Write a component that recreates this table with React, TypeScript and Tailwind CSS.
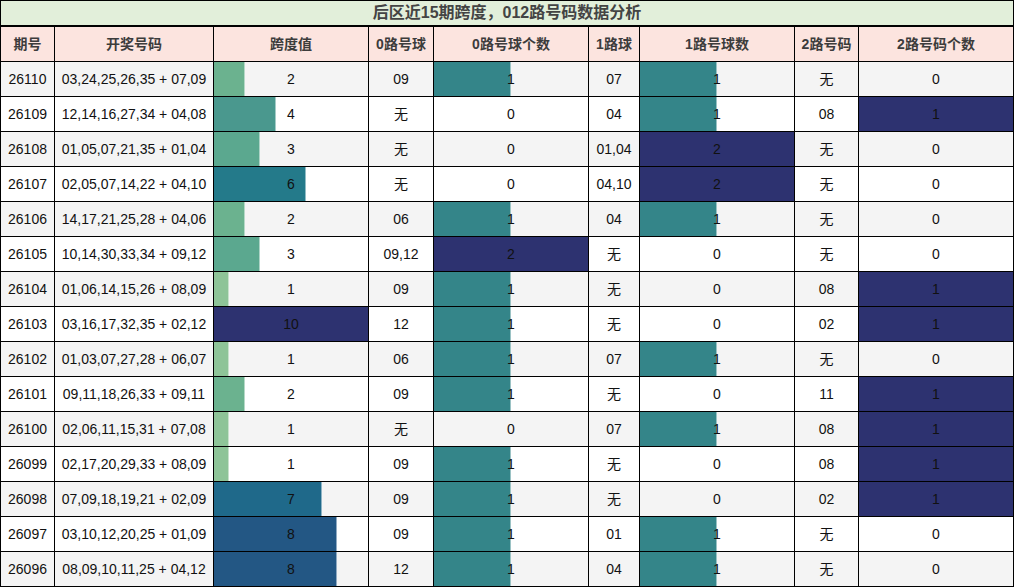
import React from "react";

type Row = [string, string, number, string, number, string, number, string, number];

const rows: Row[] = [
  ["26110", "03,24,25,26,35 + 07,09", 2, "09", 1, "07", 1, "无", 0],
  ["26109", "12,14,16,27,34 + 04,08", 4, "无", 0, "04", 1, "08", 1],
  ["26108", "01,05,07,21,35 + 01,04", 3, "无", 0, "01,04", 2, "无", 0],
  ["26107", "02,05,07,14,22 + 04,10", 6, "无", 0, "04,10", 2, "无", 0],
  ["26106", "14,17,21,25,28 + 04,06", 2, "06", 1, "04", 1, "无", 0],
  ["26105", "10,14,30,33,34 + 09,12", 3, "09,12", 2, "无", 0, "无", 0],
  ["26104", "01,06,14,15,26 + 08,09", 1, "09", 1, "无", 0, "08", 1],
  ["26103", "03,16,17,32,35 + 02,12", 10, "12", 1, "无", 0, "02", 1],
  ["26102", "01,03,07,27,28 + 06,07", 1, "06", 1, "07", 1, "无", 0],
  ["26101", "09,11,18,26,33 + 09,11", 2, "09", 1, "无", 0, "11", 1],
  ["26100", "02,06,11,15,31 + 07,08", 1, "无", 0, "07", 1, "08", 1],
  ["26099", "02,17,20,29,33 + 08,09", 1, "09", 1, "无", 0, "08", 1],
  ["26098", "07,09,18,19,21 + 02,09", 7, "09", 1, "无", 0, "02", 1],
  ["26097", "03,10,12,20,25 + 01,09", 8, "09", 1, "01", 1, "无", 0],
  ["26096", "08,09,10,11,25 + 04,12", 8, "12", 1, "04", 1, "无", 0],
];

const spanColor: Record<number, string> = {
  1: "#8ec498",
  2: "#6bb28f",
  3: "#5ba88f",
  4: "#4a988e",
  5: "#37898c",
  6: "#247a8a",
  7: "#1f698a",
  8: "#235784",
  9: "#284480",
  10: "#2d3270",
};

const widths = ["w-[54px]", "w-[159px]", "w-[155px]", "w-[65px]", "w-[155px]", "w-[51px]", "w-[155px]", "w-[64px]", "w-[155px]"];

const headers = ["期号", "开奖号码", "跨度值", "0路号球", "0路号球个数", "1路球", "1路号球数", "2路号码", "2路号码个数"];

function BarCell({ w, value, frac, color }: { w: string; value: number; frac: number; color: string }) {
  return (
    <div className={`${w} relative h-[35px] shrink-0 border-r border-b border-black flex items-center justify-center`}>
      {frac > 0 && (
        <div
          className={`absolute left-0 top-0 bottom-0 ${frac < 1 ? "border-r border-r-white/50" : ""}`}
          style={{ width: `${frac * 100}%`, backgroundColor: color }}
        />
      )}
      <span className="relative text-[14px] text-[#111]">{value}</span>
    </div>
  );
}

function TextCell({ w, children }: { w: string; children: React.ReactNode }) {
  return (
    <div className={`${w} h-[35px] shrink-0 border-r border-b border-black flex items-center justify-center text-[14px] text-[#111]`}>
      {children}
    </div>
  );
}

function countColor(frac: number) {
  return frac >= 1 ? "#2d3270" : "#348589";
}

export default function App() {
  return (
    <div
      className="w-[1014px] h-[587px] bg-white border-l border-t border-black"
      style={{ fontFamily: '"Liberation Sans", "Noto Sans CJK SC", sans-serif' }}
    >
      <div className="h-[26px] border-r border-b-2 border-black bg-[#e2efda] flex items-center justify-center text-[16px] font-bold text-[#444]">
        后区近15期跨度，012路号码数据分析
      </div>
      <div className="flex bg-[#fce4df]">
        {headers.map((h, i) => (
          <div
            key={h}
            className={`${widths[i]} h-[35px] shrink-0 border-r border-b border-black flex items-center justify-center text-[14px] font-bold text-[#3c3c3c]`}
          >
            {h}
          </div>
        ))}
      </div>
      {rows.map((r, idx) => (
        <div key={r[0]} className={`flex ${idx % 2 === 0 ? "bg-[#f4f4f4]" : "bg-white"}`}>
          <TextCell w={widths[0]}>{r[0]}</TextCell>
          <TextCell w={widths[1]}>{r[1]}</TextCell>
          <BarCell w={widths[2]} value={r[2]} frac={r[2] / 10} color={spanColor[r[2]]} />
          <TextCell w={widths[3]}>{r[3]}</TextCell>
          <BarCell w={widths[4]} value={r[4]} frac={r[4] / 2} color={countColor(r[4] / 2)} />
          <TextCell w={widths[5]}>{r[5]}</TextCell>
          <BarCell w={widths[6]} value={r[6]} frac={r[6] / 2} color={countColor(r[6] / 2)} />
          <TextCell w={widths[7]}>{r[7]}</TextCell>
          <BarCell w={widths[8]} value={r[8]} frac={r[8] / 1} color={countColor(r[8] / 1)} />
        </div>
      ))}
    </div>
  );
}
